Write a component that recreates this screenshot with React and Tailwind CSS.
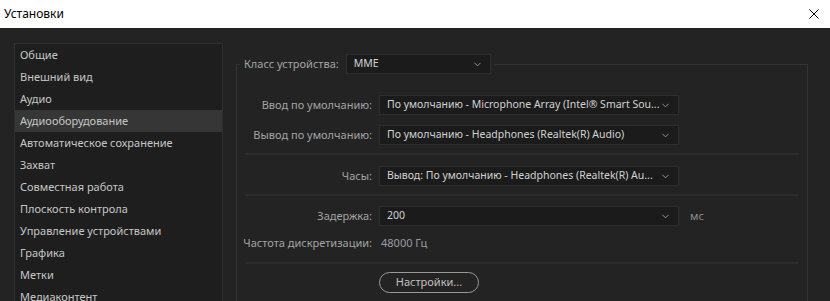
import { ChevronDown } from 'lucide-react';

const sections = [
  'Общие',
  'Внешний вид',
  'Аудио',
  'Аудиооборудование',
  'Автоматическое сохранение',
  'Захват',
  'Совместная работа',
  'Плоскость контрола',
  'Управление устройствами',
  'Графика',
  'Метки',
  'Медиаконтент',
];

function Select({ value, width = 'w-[300px]' }) {
  return (
    <div className={`flex h-[20px] ${width} items-center justify-between gap-[4px] border border-[#2e2e2e] bg-[#1b1b1b] pl-[7px] pr-[7px] text-[10.5px] text-[#d2d2d2]`}>
      <span className="min-w-0 whitespace-nowrap">{value}</span>
      <ChevronDown className="h-[11px] w-[11px] shrink-0 text-[#9a9a9a]" strokeWidth={2} />
    </div>
  );
}

function Row({ label, children, className = '' }) {
  return (
    <div className={`flex items-center gap-[7px] ${className}`}>
      <span className="w-[135px] shrink-0 whitespace-nowrap text-right text-[11px] text-[#a3a3a3]">{label}</span>
      {children}
    </div>
  );
}

const Divider = ({ className = '' }) => (
  <div className={`mx-[8px] h-[2px] bg-[#2c2c2c] ${className}`} />
);

export default function App() {
  return (
    <div className="flex h-[301px] w-[830px] flex-col overflow-hidden bg-[#232323]" style={{ fontFamily: '"Noto Sans", "Open Sans", sans-serif' }}>
      {/* Title bar */}
      <div className="flex h-[28px] shrink-0 items-center justify-between bg-white pl-[4px] pr-[11px]">
        <span className="text-[12px] text-black">Установки</span>
        <svg width="10" height="10" viewBox="0 0 10 10" className="text-black">
          <path d="M0.5 0.5L9.5 9.5M9.5 0.5L0.5 9.5" stroke="currentColor" strokeWidth="1" />
        </svg>
      </div>

      <div className="flex flex-1 pt-[15px]">
        {/* Sidebar */}
        <div className="ml-[14px] h-[300px] w-[209px] shrink-0 border border-[#2f2f2f] bg-[#1e1e1e]">
          <ul>
            {sections.map((s) => (
              <li
                key={s}
                className={`flex h-[22px] items-center pl-[5px] pt-[1px] text-[11px] text-[#c6c6c6] ${s === 'Аудиооборудование' ? 'bg-[#363636]' : ''}`}
              >
                {s}
              </li>
            ))}
          </ul>
        </div>

        {/* Device group */}
        <fieldset className="ml-[13px] mt-[11px] h-[400px] w-[572px] border border-[#333333] px-0 pb-0 pt-0">
          <legend className="ml-[3px] flex items-center gap-[7px] px-[4px]">
            <span className="whitespace-nowrap text-[11px] text-[#a3a3a3]">Класс устройства:</span>
            <Select value="MME" width="w-[145px]" />
          </legend>

          <Row label="Ввод по умолчанию:" className="mt-[21px]">
            <Select value="По умолчанию - Microphone Array (Intel® Smart Sou..." />
          </Row>
          <Row label="Вывод по умолчанию:" className="mt-[10px]">
            <Select value="По умолчанию - Headphones (Realtek(R) Audio)" />
          </Row>

          <Divider className="mt-[8px]" />

          <Row label="Часы:" className="mt-[11px]">
            <Select value="Вывод: По умолчанию - Headphones (Realtek(R) Au..." />
          </Row>

          <Divider className="mt-[8px]" />

          <Row label="Задержка:" className="mt-[10px]">
            <Select value="200" />
            <span className="ml-[4px] text-[11px] text-[#8c8c8c]">мс</span>
          </Row>
          <Row label="Частота дискретизации:" className="mt-[9px]">
            <span className="pl-[2px] text-[11px] text-[#9a9aa2]">48000 Гц</span>
          </Row>

          <Divider className="mt-[10px]" />

          <div className="ml-[142px] mt-[8px]">
            <button className="flex h-[21px] w-[100px] items-center justify-center rounded-full border border-[#9a9a9a] text-[11px] text-[#c0c0c0]">
              Настройки...
            </button>
          </div>
        </fieldset>
      </div>
    </div>
  );
}
